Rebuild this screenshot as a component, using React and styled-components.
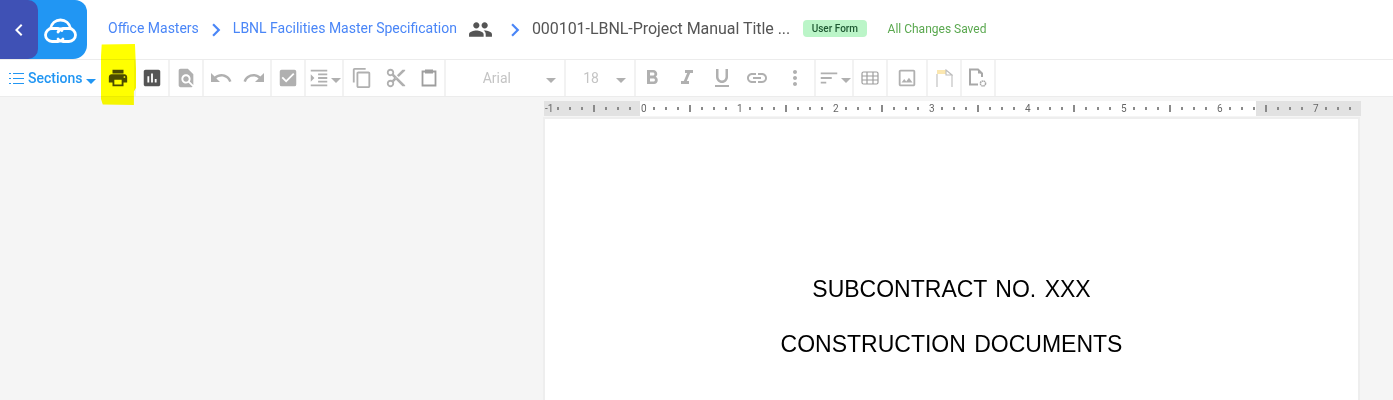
import React from 'react'
import styled, { createGlobalStyle } from 'styled-components'
import {
  MdPrint, MdAssessment, MdFindInPage, MdUndo, MdRedo, MdCheckBox, MdFormatIndentIncrease,
  MdContentCopy, MdContentCut, MdFormatBold, MdFormatItalic,
  MdFormatUnderlined, MdLink, MdMoreVert, MdOutlineImage, MdPeople, MdChevronLeft,
  MdChevronRight, MdSort,
} from 'react-icons/md'

const GlobalStyle = createGlobalStyle`
  html, body {
    margin: 0;
    height: 400px;
    overflow: hidden;
    background: #f5f5f5;
    font-family: Roboto, sans-serif;
  }
`

function Logo() {
  return (
    <svg width="33" height="25" viewBox="0 0 33 25" fill="none" stroke="#fff" strokeWidth="2.800" strokeLinecap="round" strokeLinejoin="round">
      <path d="M6.500 10.500C7.500 5.500 11.500 2 16.500 2C21.500 2 25.500 5.500 26.500 10.500" />
      <path d="M18 12.500A6.500 6.500 0 0 0 14 10.500H8A6.500 6.500 0 0 0 8 23.500H14A6.500 6.500 0 0 0 19 21" />
      <path d="M14 14A6.500 6.500 0 0 1 19 10.500H25A6.500 6.500 0 0 1 25 23.500H19A6.500 6.500 0 0 1 14 21" />
    </svg>
  )
}

function SectionsIcon() {
  return (
    <svg width="15" height="13" viewBox="0 0 15 13" fill="none" stroke="#2196f3" strokeWidth="1.200">
      <path d="M4 1.500h11M4 6.500h11M4 11.500h11M0 1.500h2M0 6.500h2M0 11.500h2" />
    </svg>
  )
}

function PasteIcon() {
  return (
    <svg width="16" height="18" viewBox="0 0 16 18" fill="none" stroke="#9e9e9e" strokeWidth="1.800">
      <path d="M4 2.500H1.500v14h13v-14H12" />
      <rect x="4.500" y="1" width="7" height="3" fill="#9e9e9e" strokeWidth="1" />
    </svg>
  )
}

function TableIcon() {
  return (
    <svg width="18" height="14" viewBox="0 0 18 14" fill="none" stroke="#9e9e9e" strokeWidth="1.200">
      <rect x="1" y="1" width="16" height="12" rx="1.500" />
      <path d="M1 5h16M1 9h16M6 1v12M12 1v12" />
    </svg>
  )
}

function HeaderIcon() {
  return (
    <svg width="17" height="18" viewBox="0 0 17 18" fill="none">
      <path d="M1 5V1h9v4z" fill="#fbe7b0" />
      <path d="M1 5v13M16 6v12" stroke="#bdbdbd" strokeWidth="1.100" />
      <path d="M10 1l6 5h-6z" stroke="#bdbdbd" strokeWidth="1.100" />
    </svg>
  )
}

function PageSettingsIcon() {
  return (
    <svg width="20" height="20" viewBox="0 0 20 20" fill="none">
      <path d="M10 16.500H2V1.500h8l4 4V9" stroke="#a8a8a8" strokeWidth="2" />
      <path d="M10 1.500v4h4" fill="#a8a8a8" />
      <circle cx="15" cy="15.500" r="2.600" stroke="#a8a8a8" strokeWidth="1.500" strokeDasharray="1.600 .5" />
    </svg>
  )
}

export default function App() {
  const cells = Array.from({ length: 68 }, (_, i) => i)

  return (
    <Page>
      <GlobalStyle />
      <TopBar>
        <BackTab><MdChevronLeft size={24} /></BackTab>
        <LogoTab><Logo /></LogoTab>
        <Crumbs>
          <CrumbLink>Office Masters</CrumbLink>
          <Chevron><MdChevronRight size={26} /></Chevron>
          <CrumbLink>LBNL Facilities Master Specification</CrumbLink>
          <PeopleIcon><MdPeople size={25} /></PeopleIcon>
          <Chevron><MdChevronRight size={26} /></Chevron>
          <DocTitle>000101-LBNL-Project Manual Title ...</DocTitle>
          <FormBadge>User Form</FormBadge>
          <SavedText>All Changes Saved</SavedText>
        </Crumbs>
      </TopBar>

      <Toolbar>
        <SectionsButton>
          <SectionsIcon />
          <span>Sections</span>
          <Caret $blue />
        </SectionsButton>
        <Group $w={34}><MdPrint size={22} color="#4b4b10" /></Group>
        <Group $w={34}><MdAssessment size={22} color="#555" /></Group>
        <Group $w={34}><MdFindInPage size={22} /></Group>
        <Group $w={68} $gap={9}><MdUndo size={24} /><MdRedo size={24} /></Group>
        <Group $w={34}><MdCheckBox size={22} /></Group>
        <Group $w={38}><MdFormatIndentIncrease size={22} /><Caret /></Group>
        <ClipboardGroup $w={102}><MdContentCopy size={22} /><MdContentCut size={22} /><PasteIcon /></ClipboardGroup>
        <SelectGroup $w={120}><SelectLabel>Arial</SelectLabel><Caret /></SelectGroup>
        <SelectGroup $w={70} $size><SelectLabel>18</SelectLabel><Caret /></SelectGroup>
        <FormatGroup $w={180}>
          <MdFormatBold size={24} />
          <MdFormatItalic size={24} />
          <MdFormatUnderlined size={24} />
          <MdLink size={24} />
          <MdMoreVert size={24} />
        </FormatGroup>
        <Group $w={38}><MdSort size={22} /><Caret /></Group>
        <Group $w={34}><TableIcon /></Group>
        <Group $w={40}><MdOutlineImage size={22} /></Group>
        <Group $w={34}><HeaderIcon /></Group>
        <Group $w={34}><PageSettingsIcon /></Group>
        <Marker />
      </Toolbar>

      <Workspace>
        <DocColumn>
          <Ruler>
            {cells.map((i) => (
              <RulerCell key={i}>
                {i % 8 === 0
                  ? <RulerNum>{i / 8 - 1}</RulerNum>
                  : <RulerTick $long={i % 4 === 0} />}
              </RulerCell>
            ))}
          </Ruler>
          <Sheet>
            <SheetLine>SUBCONTRACT NO. XXX</SheetLine>
            <SheetLine>CONSTRUCTION DOCUMENTS</SheetLine>
          </Sheet>
        </DocColumn>
      </Workspace>
    </Page>
  )
}

const Page = styled.div`
  width: 1393px;
  height: 400px;
  overflow: hidden;
  background: #f5f5f5;
`

const TopBar = styled.header`
  height: 59px;
  display: flex;
  background: #fff;
  border-bottom: 1px solid #ececec;
`

const BackTab = styled.div`
  width: 38px;
  position: relative;
  z-index: 1;
  display: flex;
  align-items: center;
  justify-content: center;
  background: #3f51b5;
  border-radius: 0 10px 10px 0;
  color: #fff;
`

const LogoTab = styled.div`
  width: 61px;
  margin-left: -12px;
  padding: 2px 0 0 8px;
  box-sizing: border-box;
  display: flex;
  align-items: center;
  justify-content: center;
  background: #2196f3;
  border-radius: 0 12px 14px 0;
`

const Crumbs = styled.nav`
  display: flex;
  align-items: center;
  padding-left: 21px;
  padding-bottom: 2px;
`

const CrumbLink = styled.span`
  font-size: 14px;
  color: #4a86f7;
  margin-bottom: 2px;
`

const Chevron = styled.span`
  display: flex;
  color: #4a86f7;
  margin: 2px 4px 0;
`

const PeopleIcon = styled.span`
  display: flex;
  color: #555;
  margin: 2px 5px 0 11px;
`

const DocTitle = styled.span`
  font-size: 16px;
  letter-spacing: -0.05px;
  color: #555;
`

const FormBadge = styled.span`
  margin-left: 13px;
  padding: 0 8.500px;
  height: 17px;
  line-height: 17px;
  border-radius: 4px;
  background: #bbf5c8;
  color: #1f5a33;
  font-size: 10px;
  font-weight: 500;
`

const SavedText = styled.span`
  margin-left: 21px;
  font-size: 12px;
  color: #5aa84f;
`

const Toolbar = styled.div`
  height: 36px;
  display: flex;
  position: relative;
  background: #fff;
  border-bottom: 1px solid #ececec;
`

const SectionsButton = styled.div`
  width: 102px;
  box-sizing: border-box;
  padding: 0 0 0 9px;
  display: flex;
  align-items: center;
  color: #2196f3;
  font-size: 14px;
  font-weight: 500;

  span {
    margin-left: 4px;
  }
`

const Group = styled.div`
  width: ${(p) => p.$w}px;
  box-sizing: border-box;
  display: flex;
  align-items: center;
  justify-content: center;
  gap: ${(p) => p.$gap || 0}px;
  border-right: 2px solid #f2f2f2;
  color: #b0b0b0;
`

const ClipboardGroup = styled(Group)`
  justify-content: flex-start;
  padding-left: 7px;
  gap: 12px;

  svg:last-child {
    margin-left: 2px;
  }
`

const SelectGroup = styled(Group)`
  justify-content: flex-end;
  padding-right: 8px;
  gap: ${(p) => (p.$size ? 16 : 34)}px;
`

const FormatGroup = styled(Group)`
  justify-content: flex-start;
  padding-left: 4px;
  gap: 11px;

  svg:last-child {
    margin-left: 3px;
  }
`

const SelectLabel = styled.span`
  font-size: 14px;
  color: #c4c4c4;
`

const Caret = styled.span`
  width: 0;
  height: 0;
  flex: none;
  margin: ${(p) => (p.$blue ? '7px 0 0 8px' : '5px 0 0 1px')};
  border-left: 5px solid transparent;
  border-right: 5px solid transparent;
  border-top: 5px solid ${(p) => (p.$blue ? '#2196f3' : '#b0b0b0')};
`

const Marker = styled.div`
  position: absolute;
  left: 101px;
  top: -16px;
  width: 35px;
  height: 61px;
  background: #ffff00;
  mix-blend-mode: multiply;
  pointer-events: none;
  clip-path: polygon(2% 1%, 97% 0, 100% 40%, 100% 72%, 94% 78%, 94% 100%, 5% 99%, 0 90%, 0 20%);
`

const Workspace = styled.main`
  display: flex;
  padding: 4px 0 0 544px;
`

const DocColumn = styled.div`
  width: 817px;
`

const Ruler = styled.div`
  display: flex;
  height: 15px;
  background: linear-gradient(to right, #e2e2e2 96px, #fff 96px, #fff 712px, #e2e2e2 712px);
`

const RulerCell = styled.div`
  flex: 0 0 12px;
  display: flex;
  align-items: center;
  justify-content: flex-start;
  padding-left: 1px;
  box-sizing: border-box;
`

const RulerNum = styled.span`
  font-size: 10px;
  color: #666;
  line-height: 1;
`

const RulerTick = styled.span`
  width: 2px;
  height: ${(p) => (p.$long ? 7 : 3)}px;
  background: #8a8a8a;
`

const Sheet = styled.div`
  width: 817px;
  box-sizing: border-box;
  margin: 1px 0 0 -1px;
  height: 300px;
  padding-top: 156px;
  background: #fff;
  border: 2px solid #eee;
  border-bottom: 0;
  text-align: center;
`

const SheetLine = styled.p`
  margin: 0 0 27px;
  font-family: "Liberation Sans", Arial, sans-serif;
  font-size: 23px;
  word-spacing: 2px;
  line-height: 28px;
  color: #000;
`
